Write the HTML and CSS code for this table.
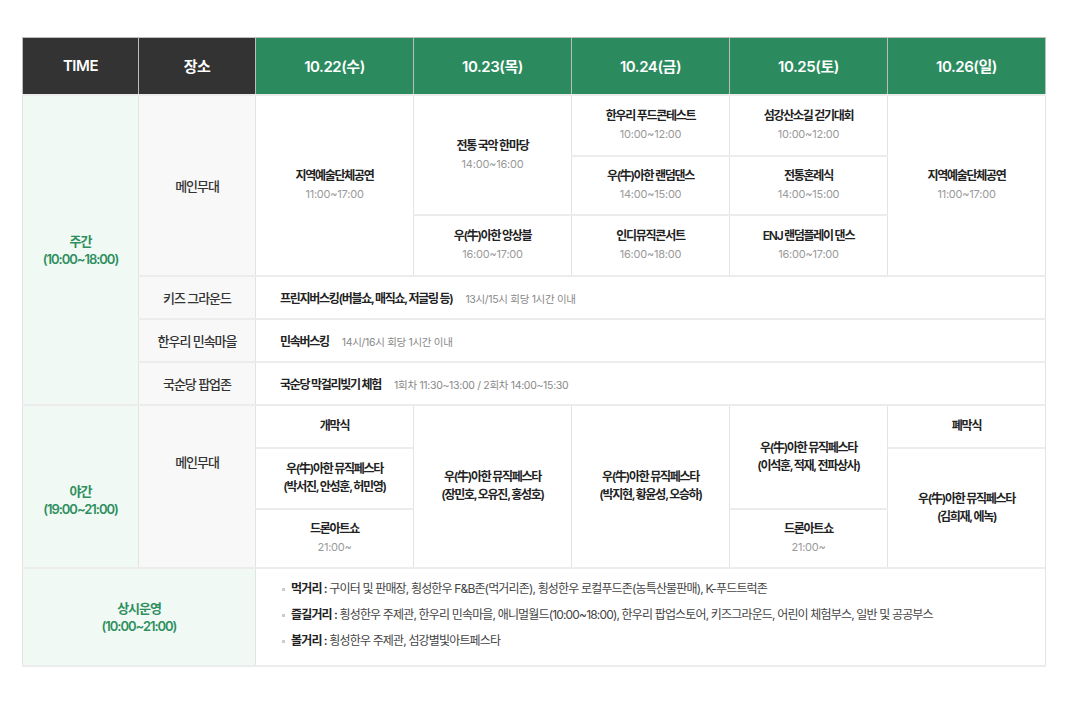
FILE: index.html
```html
<!DOCTYPE html>
<html lang="ko">
<head>
<meta charset="utf-8">
<title>행사 일정표</title>
<link rel="stylesheet" href="styles.css">
</head>
<body>
<div class="wrap">
<table class="sched">
  <colgroup>
    <col class="c-time"><col class="c-place"><col class="c-day"><col class="c-day"><col class="c-day"><col class="c-day"><col class="c-day">
  </colgroup>
  <thead>
    <tr>
      <th class="th-dark">TIME</th>
      <th class="th-dark">장소</th>
      <th class="th-green">10.22(수)</th>
      <th class="th-green">10.23(목)</th>
      <th class="th-green">10.24(금)</th>
      <th class="th-green">10.25(토)</th>
      <th class="th-green">10.26(일)</th>
    </tr>
  </thead>
  <tbody>
    <tr class="h61">
      <td rowspan="6" class="time">주간<br>(10:00~18:00)</td>
      <td rowspan="3" class="place">메인무대</td>
      <td rowspan="3" class="ev"><b>지역예술단체공연</b><span>11:00~17:00</span></td>
      <td rowspan="2" class="ev"><b>전통 국악 한마당</b><span>14:00~16:00</span></td>
      <td class="ev"><b>한우리 푸드콘테스트</b><span>10:00~12:00</span></td>
      <td class="ev"><b>섬강산소길 걷기대회</b><span>10:00~12:00</span></td>
      <td rowspan="3" class="ev"><b>지역예술단체공연</b><span>11:00~17:00</span></td>
    </tr>
    <tr class="h59">
      <td class="ev"><b>우(牛)아한 랜덤댄스</b><span>14:00~15:00</span></td>
      <td class="ev"><b>전통혼례식</b><span>14:00~15:00</span></td>
    </tr>
    <tr class="h61">
      <td class="ev"><b>우(牛)아한 앙상블</b><span>16:00~17:00</span></td>
      <td class="ev"><b>인디뮤직콘서트</b><span>16:00~18:00</span></td>
      <td class="ev"><b>ENJ 랜덤플레이 댄스</b><span>16:00~17:00</span></td>
    </tr>
    <tr class="h43">
      <td class="place">키즈 그라운드</td>
      <td colspan="5" class="wide"><b>프린지버스킹(버블쇼, 매직쇼, 저글링 등)</b><span class="note">13시/15시 회당 1시간 이내</span></td>
    </tr>
    <tr class="h43">
      <td class="place">한우리 민속마을</td>
      <td colspan="5" class="wide"><b>민속버스킹</b><span class="note">14시/16시 회당 1시간 이내</span></td>
    </tr>
    <tr class="h43">
      <td class="place">국순당 팝업존</td>
      <td colspan="5" class="wide"><b>국순당 막걸리빚기 체험</b><span class="note">1회차 11:30~13:00 / 2회차 14:00~15:30</span></td>
    </tr>
    <tr class="h43">
      <td rowspan="3" class="time time-night">야간<br>(19:00~21:00)</td>
      <td rowspan="3" class="place place-night">메인무대</td>
      <td class="ev"><b>개막식</b></td>
      <td rowspan="3" class="ev"><b>우(牛)아한 뮤직페스타</b><b>(장민호, 오유진, 홍성호)</b></td>
      <td rowspan="3" class="ev"><b>우(牛)아한 뮤직페스타</b><b>(박지현, 황윤성, 오승하)</b></td>
      <td rowspan="2" class="ev"><b>우(牛)아한 뮤직페스타</b><b>(이석훈, 적재, 전파상사)</b></td>
      <td class="ev"><b>폐막식</b></td>
    </tr>
    <tr class="h61">
      <td class="ev"><b>우(牛)아한 뮤직페스타</b><b>(박서진, 안성훈, 허민영)</b></td>
      <td rowspan="2" class="ev"><b>우(牛)아한 뮤직페스타</b><b>(김희재, 에녹)</b></td>
    </tr>
    <tr class="h59">
      <td class="ev"><b>드론아트쇼</b><span>21:00~</span></td>
      <td class="ev"><b>드론아트쇼</b><span>21:00~</span></td>
    </tr>
    <tr class="h98">
      <td colspan="2" class="time">상시운영<br>(10:00~21:00)</td>
      <td colspan="5" class="wide list-cell">
        <ul class="always">
          <li><b>먹거리 :</b> 구이터 및 판매장, 횡성한우 F&amp;B존(먹거리존), 횡성한우 로컬푸드존(농특산물판매), K-푸드트럭존</li>
          <li><b>즐길거리 :</b> 횡성한우 주제관, 한우리 민속마을, 애니멀월드(10:00~18:00), 한우리 팝업스토어, 키즈그라운드, 어린이 체험부스, 일반 및 공공부스</li>
          <li><b>볼거리 :</b> 횡성한우 주제관, 섬강별빛아트페스타</li>
        </ul>
      </td>
    </tr>
  </tbody>
</table>
</div>
</body>
</html>
```

FILE: styles.css
```css
* { box-sizing: border-box; }
html, body { margin: 0; padding: 0; background: #fff; }
body {
  font-family: Inter, "Noto Sans CJK KR", sans-serif;
  color: #222;
}
.wrap { padding: 37px 0 0 22px; }

.sched {
  width: 1023px;
  border-collapse: collapse;
  table-layout: fixed;
}
.c-time { width: 116px; }
.c-place { width: 117px; }
.c-day { width: 158px; }

.sched th {
  height: 57px;
  font-size: 15px;
  font-weight: 600;
  color: #fff;
  border: 1px solid #bdbdbd;
  letter-spacing: -0.03em;
  padding: 0;
}
.th-dark { background: #333333; }
.th-green { background: #2b8b5e; }

.sched td {
  border-left: 1px solid #e3e3e3;
  border-right: 1px solid #e3e3e3;
  border-top: 2px solid #ececec;
  border-bottom: 2px solid #ececec;
  text-align: center;
  vertical-align: middle;
  padding: 0 6px;
  letter-spacing: -0.08em;
}
.h43 { height: 43px; }
.h59 { height: 59px; }
.h61 { height: 61px; }
.h98 { height: 98px; }

.time {
  background: #f1f9f4;
  color: #2e8f5f;
  font-size: 13px;
  font-weight: 600;
  line-height: 18px;
}
.time-night { padding-top: 28px !important; }

.place {
  background: #f8f8f8;
  color: #333;
  font-size: 13px;
  font-weight: 500;
}
.place-night { padding-bottom: 50px !important; }

.ev b {
  display: block;
  font-size: 12px;
  font-weight: 600;
  line-height: 18px;
  color: #222;
}
.ev span {
  display: block;
  font-size: 11px;
  line-height: 18px;
  color: #999;
  letter-spacing: -0.02em;
}

.sched td.wide {
  text-align: left;
  padding-left: 24px;
}
.wide b {
  font-size: 12px;
  font-weight: 600;
  color: #222;
}
.note {
  font-size: 10.5px;
  color: #888;
  margin-left: 13px;
  letter-spacing: -0.03em;
}

.sched td.list-cell { padding: 0 0 3px 26px; }
.always {
  list-style: none;
  margin: 0;
  padding: 0;
}
.always li {
  position: relative;
  padding-left: 9px;
  font-size: 12px;
  line-height: 26px;
  color: #444;
  letter-spacing: -0.07em;
}
.always li::before {
  content: "";
  position: absolute;
  left: 0;
  top: 12px;
  width: 3px;
  height: 3px;
  background: #cccccc;
}
.always li b {
  font-size: 12px;
  font-weight: 600;
  color: #222;
}
```
